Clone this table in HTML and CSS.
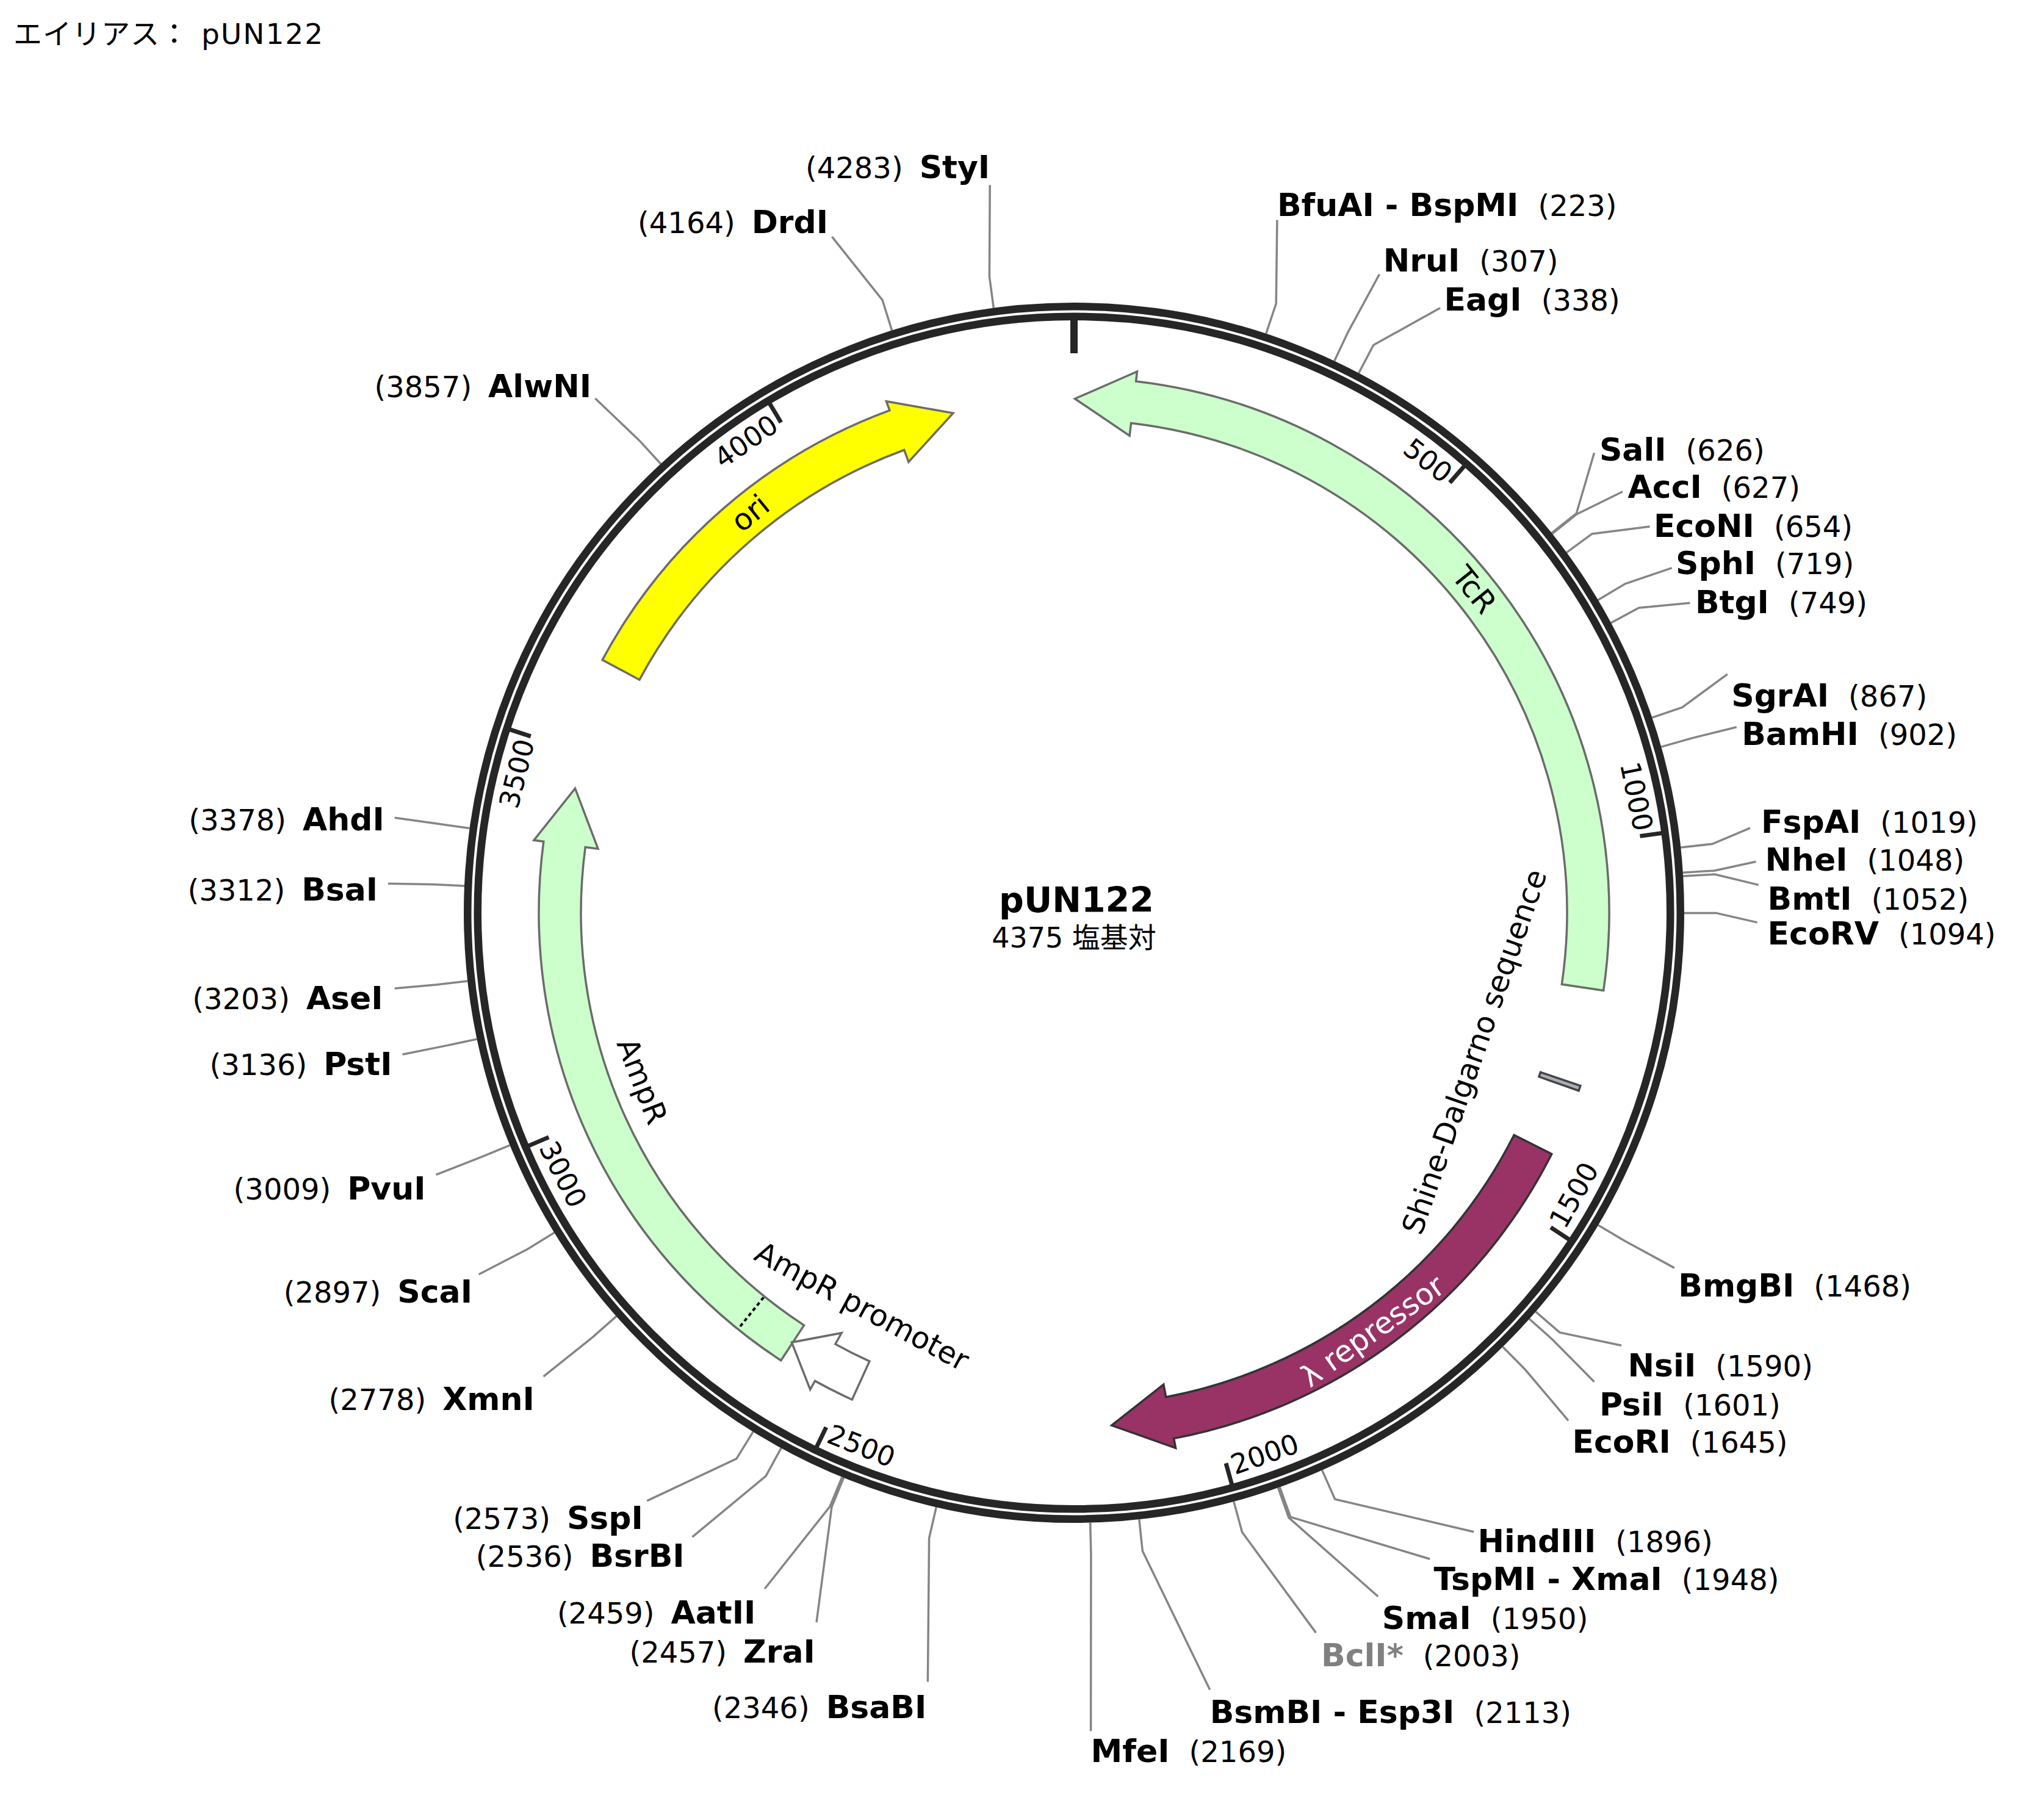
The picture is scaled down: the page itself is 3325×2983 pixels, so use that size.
FILE: index.html
```html
<!DOCTYPE html>
<html lang="ja">
<head>
<meta charset="utf-8">
<title>pUN122</title>
<link rel="stylesheet" href="styles.css">
</head>
<body>
<div class="page">
  <div class="alias">エイリアス：<span class="alias-id">pUN122</span></div>
  <svg class="map" id="map" xmlns="http://www.w3.org/2000/svg" viewBox="0 0 3325 2983" width="3325" height="2983">
    <g id="leaders"></g>
    <circle class="ring" cx="1760" cy="1496" r="985.5"></circle>
    <circle class="ring-gap" cx="1760" cy="1496" r="985.5"></circle>
    <g id="ticks"></g>
    <g id="features"></g>
    <g id="labels"></g>
    <text class="center-name" x="1764" y="1495" text-anchor="middle">pUN122</text>
    <text class="center-len" x="1760" y="1553" text-anchor="middle">4375 塩基対</text>
  </svg>
</div>
<script src="script.js"></script>
</body>
</html>
```

FILE: styles.css
```css
html, body {
  margin: 0;
  padding: 0;
  background: #ffffff;
}

.page {
  display: grid;
  width: 3325px;
  height: 2983px;
}

.alias,
.map {
  grid-area: 1 / 1;
}

.alias {
  align-self: start;
  justify-self: start;
  padding: 32px 0 0 22px;
  font-family: "DejaVu Sans", "Noto Sans CJK JP", sans-serif;
  font-size: 47px;
  line-height: 1;
  color: #000000;
  letter-spacing: 1px;
  white-space: nowrap;
}

.alias-id {
  margin-left: 20px;
  letter-spacing: 2px;
}

.map {
  display: block;
}

.map text {
  font-family: "DejaVu Sans", "Noto Sans CJK JP", sans-serif;
  fill: #000000;
}

.ring {
  fill: none;
  stroke: #262626;
  stroke-width: 29;
}

.ring-gap {
  fill: none;
  stroke: #ffffff;
  stroke-width: 4;
}

.tick {
  stroke: #262626;
  stroke-width: 7;
}

.tick-zero {
  stroke-width: 12;
}

.leader {
  fill: none;
  stroke: #858585;
  stroke-width: 3.5;
}

.feat {
  stroke: #6b6b6b;
  stroke-width: 3.5;
  stroke-linejoin: miter;
}

.f-green { fill: #ccffcc; }
.f-yellow { fill: #ffff00; }
.f-white { fill: #ffffff; }
.f-lambda { fill: #993366; stroke: #333333; }
.f-sd { fill: #a8aeb8; stroke: #444444; }

.dotted {
  stroke: #000000;
  stroke-width: 4;
  stroke-dasharray: 6 5;
}

.map .tick-label {
  font-size: 45px;
}

.map .feat-label {
  font-size: 49px;
}

.map .feat-label-light {
  fill: #ffffff;
}

.map .pos {
  font-size: 48px;
  font-weight: normal;
}

.map .nm {
  font-size: 52px;
  font-weight: bold;
}

.map .nm-dim {
  fill: #808080;
}

.map .center-name {
  font-size: 57px;
  font-weight: bold;
}

.map .center-len {
  font-size: 46px;
}
```

FILE: script.js
```javascript
(function () {
  var NS = "http://www.w3.org/2000/svg";
  var CX = 1760, CY = 1496, TOTAL = 4375, S = 2.1205;
  var RI = 808, RO = 877, RM = 842.5, WI = 787, WO = 893;

  var gLead = document.getElementById("leaders");
  var gTick = document.getElementById("ticks");
  var gFeat = document.getElementById("features");
  var gLab = document.getElementById("labels");

  function ang(bp) { return bp / TOTAL * 360; }
  function pt(r, a) {
    var t = a * Math.PI / 180;
    return [CX + r * Math.sin(t), CY - r * Math.cos(t)];
  }
  function f(p) { return p[0].toFixed(1) + " " + p[1].toFixed(1); }
  function el(tag, attrs, parent) {
    var e = document.createElementNS(NS, tag);
    for (var k in attrs) e.setAttribute(k, attrs[k]);
    parent.appendChild(e);
    return e;
  }

  function ftext(txt, a, r, cls, parent) {
    var p = pt(r, a);
    var n = ((a % 360) + 360) % 360;
    var rot = (n > 90 && n < 270) ? n - 180 : n;
    var t = el("text", {
      x: p[0].toFixed(1), y: p[1].toFixed(1),
      transform: "rotate(" + rot.toFixed(2) + " " + p[0].toFixed(1) + " " + p[1].toFixed(1) + ")",
      "class": cls, "text-anchor": "middle", "dominant-baseline": "central"
    }, parent);
    t.textContent = txt;
    return t;
  }

  /* ticks */
  for (var k = 0; k <= 8; k++) {
    var bp = k * 500, a = ang(bp);
    var p1 = pt(973, a), p2 = pt(k === 0 ? 917 : 936, a);
    el("line", { x1: p1[0].toFixed(1), y1: p1[1].toFixed(1), x2: p2[0].toFixed(1), y2: p2[1].toFixed(1),
      "class": k === 0 ? "tick tick-zero" : "tick" }, gTick);
    if (k > 0) {
      var s = String(bp);
      var w = 0.636 * 45 * s.length;
      var ac = a - (w / 2 + 8) / 941 * 180 / Math.PI;
      ftext(s, ac, 941, "tick-label", gTick);
    }
  }

  function arrow(a1, a2, fwd, head) {
    var hb, large;
    if (fwd) {
      hb = a2 - head; large = (hb - a1) > 180 ? 1 : 0;
      return "M" + f(pt(RO, a1)) + " A" + RO + " " + RO + " 0 " + large + " 1 " + f(pt(RO, hb)) +
        " L" + f(pt(WO, hb)) + " L" + f(pt(RM, a2)) + " L" + f(pt(WI, hb)) + " L" + f(pt(RI, hb)) +
        " A" + RI + " " + RI + " 0 " + large + " 0 " + f(pt(RI, a1)) + " Z";
    }
    hb = a1 + head; large = (a2 - hb) > 180 ? 1 : 0;
    return "M" + f(pt(RO, a2)) + " A" + RO + " " + RO + " 0 " + large + " 0 " + f(pt(RO, hb)) +
      " L" + f(pt(WO, hb)) + " L" + f(pt(RM, a1)) + " L" + f(pt(WI, hb)) + " L" + f(pt(RI, hb)) +
      " A" + RI + " " + RI + " 0 " + large + " 1 " + f(pt(RI, a2)) + " Z";
  }

  /* features */
  el("path", { d: arrow(0.1, 98.35, false, 6.55), "class": "feat f-green" }, gFeat);
  el("path", { d: arrow(298.2, 346.4, true, 6.55), "class": "feat f-yellow" }, gFeat);
  el("path", { d: arrow(213.2, 284.0, true, 6.35), "class": "feat f-green" }, gFeat);
  el("path", { d: arrow(204.5, 213.3, true, 4.35), "class": "feat f-white" }, gFeat);
  el("path", { d: arrow(116.8, 175.8, true, 6.55), "class": "feat f-lambda" }, gFeat);

  var sa = 109.15, sw = 0.28;
  el("path", { d: "M" + f(pt(RI, sa - sw)) + " L" + f(pt(RO, sa - sw)) + " L" + f(pt(RO, sa + sw)) +
    " L" + f(pt(RI, sa + sw)) + " Z", "class": "feat f-sd" }, gFeat);

  var d1 = pt(RI + 2, 218.9), d2 = pt(RO - 2, 218.9);
  el("line", { x1: d1[0].toFixed(1), y1: d1[1].toFixed(1), x2: d2[0].toFixed(1), y2: d2[1].toFixed(1),
    "class": "dotted" }, gFeat);

  ftext("ori", 321, RM, "feat-label", gFeat);
  ftext("TcR", 51.1, RM, "feat-label", gFeat);
  ftext("\u03bb repressor", 144.5, RM, "feat-label feat-label-light", gFeat);
  ftext("AmpR", 248.7, 760, "feat-label", gFeat);
  ftext("AmpR promoter", 208.3, 733, "feat-label", gFeat);
  ftext("Shine-Dalgarno sequence", 109.15, 695, "feat-label", gFeat);

  /* restriction sites: name, position, side, x (display), y centre (display), leader end x, y, dim */
  var sites = [
    ["StyI", 4283, "L", 765, 128, 765, 143],
    ["DrdI", 4164, "L", 640, 170, 643, 183],
    ["AlwNI", 3857, "L", 457, 297, 460, 308],
    ["AhdI", 3378, "L", 297, 632, 305, 632],
    ["BsaI", 3312, "L", 292, 686, 300, 683],
    ["AseI", 3203, "L", 296, 770, 305, 764],
    ["PstI", 3136, "L", 303, 821, 311, 815],
    ["PvuI", 3009, "L", 329, 917, 337, 908],
    ["ScaI", 2897, "L", 365, 997, 370, 985],
    ["XmnI", 2778, "L", 413, 1080, 420, 1064],
    ["SspI", 2573, "L", 497, 1172, 500, 1160],
    ["BsrBI", 2536, "L", 529, 1201, 535, 1188],
    ["AatII", 2459, "L", 584, 1245, 591, 1228],
    ["ZraI", 2457, "L", 630, 1275, 631, 1254],
    ["BsaBI", 2346, "L", 716, 1318, 717, 1300],
    ["MfeI", 2169, "R", 843, 1352, 843, 1338],
    ["BsmBI - Esp3I", 2113, "R", 935, 1322, 935, 1306],
    ["BclI*", 2003, "R", 1021, 1278, 1017, 1262, true],
    ["SmaI", 1950, "R", 1068, 1249, 1065, 1234],
    ["TspMI - XmaI", 1948, "R", 1108, 1219, 1105, 1205],
    ["HindIII", 1896, "R", 1142, 1190, 1139, 1184],
    ["EcoRI", 1645, "R", 1215, 1113, 1212, 1098],
    ["PsiI", 1601, "R", 1236, 1084, 1232, 1068],
    ["NsiI", 1590, "R", 1258, 1054, 1253, 1040],
    ["BmgBI", 1468, "R", 1297, 992, 1294, 980],
    ["EcoRV", 1094, "R", 1366, 720, 1358, 713],
    ["BmtI", 1052, "R", 1366, 693, 1359, 684],
    ["NheI", 1048, "R", 1364, 663, 1357, 666],
    ["FspAI", 1019, "R", 1361, 634, 1352.5, 640],
    ["BamHI", 902, "R", 1346, 566, 1342, 562],
    ["SgrAI", 867, "R", 1338, 536, 1335, 521],
    ["BtgI", 749, "R", 1310, 464, 1306, 466],
    ["SphI", 719, "R", 1295, 434, 1292, 439],
    ["EcoNI", 654, "R", 1278, 405, 1275, 407],
    ["AccI", 627, "R", 1258, 375, 1254, 380],
    ["SalI", 626, "R", 1236, 346, 1232, 350],
    ["EagI", 338, "R", 1116, 230, 1113, 238],
    ["NruI", 307, "R", 1069, 200, 1066, 212],
    ["BfuAI - BspMI", 223, "R", 987, 157, 987, 170]
  ];

  sites.forEach(function (s) {
    var a = ang(s[1]);
    var A = pt(1000, a), B = pt(1052, a), C = [s[5] * S, s[6] * S];
    el("polyline", { points: f(A) + " " + f(B) + " " + f(C), "class": "leader" }, gLead);

    var x = s[3] * S, y = s[4] * S + 21;
    var left = s[2] === "L";
    var t = el("text", { x: x.toFixed(1), y: y.toFixed(1), "text-anchor": left ? "end" : "start" }, gLab);
    var pos = document.createElementNS(NS, "tspan");
    pos.setAttribute("class", "pos");
    pos.textContent = "(" + s[1] + ")";
    var nm = document.createElementNS(NS, "tspan");
    nm.setAttribute("class", s[7] ? "nm nm-dim" : "nm");
    nm.textContent = s[0];
    if (left) {
      t.appendChild(pos);
      nm.setAttribute("dx", "27");
      t.appendChild(nm);
    } else {
      t.appendChild(nm);
      pos.setAttribute("dx", "32");
      t.appendChild(pos);
    }
  });
})();
```
